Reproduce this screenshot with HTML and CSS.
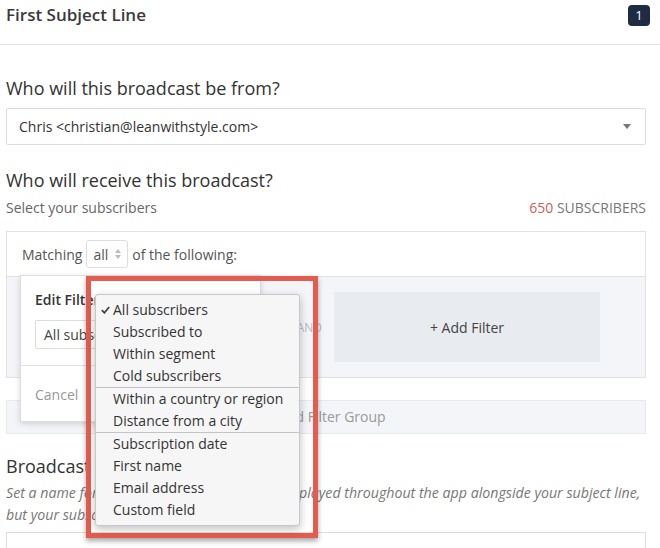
FILE: index.html
```html
<!DOCTYPE html>
<html lang="en">
<head>
    <meta charset="UTF-8">
    <meta name="viewport" content="width=device-width, initial-scale=1.0">
    <title>Broadcast - Subscribers</title>
    <link rel="stylesheet" href="styles.css">
</head>
<body>
    <div class="subject-header">
        <span class="subject-title">First Subject Line</span>
        <span class="count-badge">1</span>
    </div>

    <div class="content">
        <h2 class="field-title from-title">Who will this broadcast be from?</h2>
        <div class="select-box">
            <span>Chris &lt;christian@leanwithstyle.com&gt;</span>
            <svg class="caret" width="8" height="5" viewBox="0 0 8 5"><path d="M0 0h8L4 5z" fill="#777"/></svg>
        </div>

        <h2 class="field-title receive-title">Who will receive this broadcast?</h2>
        <div class="subscribers-row">
            <span>Select your subscribers</span>
            <span class="subscriber-count"><b>650</b> SUBSCRIBERS</span>
        </div>

        <div class="filter-box">
            <div class="matching-row">
                <span>Matching</span>
                <span class="mini-select">all
                    <svg width="6" height="10" viewBox="0 0 6 10"><path d="M0 4L3 0l3 4zM0 6h6l-3 4z" fill="#bbb"/></svg>
                </span>
                <span>of the following:</span>
            </div>
            <div class="filter-group">
                <div class="filter-slot">
                    <div class="edit-card">
                        <div class="card-body">
                            <h4>Edit Filter</h4>
                            <div class="card-select">All subscribers</div>
                        </div>
                        <div class="card-footer">
                            <span class="cancel">Cancel</span>
                            <span class="save">Save</span>
                        </div>
                    </div>
                </div>
                <div class="and-label">AND</div>
                <div class="add-filter">+ Add Filter</div>
            </div>
        </div>

        <div class="add-group">+ Add Filter Group</div>

        <h2 class="field-title name-title">Broadcast Name</h2>
        <p class="help-text">Set a name for the broadcast. It will only be displayed throughout the app alongside your subject line, but your subscribers won't see it.</p>
        <div class="name-input"></div>
    </div>

    <!-- annotation drawn over the screenshot -->
    <div class="highlight"></div>

    <ul class="option-menu">
        <li class="checked">
            <svg class="check" width="9" height="8" viewBox="0 0 9 8"><path d="M0.8 4.2l2.6 2.6L8.2 1" fill="none" stroke="#444" stroke-width="1.8"/></svg>
            All subscribers
        </li>
        <li>Subscribed to</li>
        <li>Within segment</li>
        <li class="group-end">Cold subscribers</li>
        <li>Within a country or region</li>
        <li class="group-end">Distance from a city</li>
        <li>Subscription date</li>
        <li>First name</li>
        <li>Email address</li>
        <li>Custom field</li>
    </ul>
</body>
</html>
```

FILE: styles.css
```css
body {
    margin: 0;
    font-family: "Open Sans", sans-serif;
    color: #333;
    background: #fff;
}

.subject-header {
    display: flex;
    justify-content: space-between;
    align-items: flex-start;
    height: 44px;
    padding: 0 10px 0 6px;
    border-bottom: 1px solid #e2e2e2;
}

.subject-title {
    font-size: 17px;
    font-weight: 600;
    line-height: 30px;
    color: #3a3a3a;
}

.count-badge {
    margin-top: 5px;
    width: 22px;
    height: 21px;
    background: #1f2b45;
    border-radius: 4px;
    color: #fff;
    font-size: 13px;
    line-height: 21px;
    text-align: center;
}

.content {
    margin: 0 14px 0 6px;
}

.field-title {
    margin: 0;
    font-size: 18px;
    font-weight: 400;
    line-height: 26px;
    color: #333;
}

.from-title {
    margin-top: 30px;
}

.select-box {
    margin-top: 7px;
    height: 37px;
    box-sizing: border-box;
    border: 1px solid #ddd;
    border-radius: 2px;
    display: flex;
    align-items: center;
    justify-content: space-between;
    padding: 0 14px 0 12px;
    font-size: 14px;
    color: #333;
}

.receive-title {
    margin-top: 22px;
}

.subscribers-row {
    margin-top: 5px;
    display: flex;
    justify-content: space-between;
    font-size: 14px;
    line-height: 20px;
    color: #666;
}

.subscriber-count {
    color: #777;
}

.subscriber-count b {
    font-weight: 400;
    color: #d35b5b;
}

.filter-box {
    margin-top: 13px;
    border: 1px solid #e2e2e2;
}

.matching-row {
    height: 44px;
    display: flex;
    align-items: center;
    padding-left: 15px;
    font-size: 14px;
    color: #555;
}

.mini-select {
    height: 28px;
    box-sizing: border-box;
    margin: 0 4px;
    padding: 0 6px;
    border: 1px solid #ddd;
    border-radius: 3px;
    display: flex;
    align-items: center;
    gap: 7px;
}

.filter-group {
    height: 101px;
    box-sizing: border-box;
    border-top: 1px solid #e2e2e2;
    background: #f3f5f8;
    padding: 15px 0 15px 13px;
    display: flex;
}

.filter-slot {
    width: 260px;
    position: relative;
}

.edit-card {
    position: absolute;
    top: -17px;
    left: 0;
    width: 241px;
    height: 147px;
    box-sizing: border-box;
    background: #fff;
    border: 1px solid #ddd;
    box-shadow: 0 2px 6px rgba(0, 0, 0, 0.15);
    z-index: 1;
}

.card-body {
    padding: 14px 14px 16px;
    border-bottom: 1px solid #e2e2e2;
}

.card-body h4 {
    margin: 0;
    font-size: 14px;
    font-weight: 600;
    line-height: 20px;
    color: #333;
}

.card-select {
    margin-top: 10px;
    height: 29px;
    box-sizing: border-box;
    border: 1px solid #ddd;
    border-radius: 2px;
    padding: 0 8px;
    font-size: 14px;
    line-height: 27px;
    color: #444;
}

.card-footer {
    height: 56px;
    display: flex;
    align-items: center;
    justify-content: space-between;
    padding: 0 14px;
    font-size: 14px;
}

.cancel {
    color: #999;
}

.save {
    color: #fff;
}

.and-label {
    width: 54px;
    box-sizing: border-box;
    padding-right: 12px;
    align-self: center;
    text-align: right;
    font-size: 12px;
    color: #bbb;
}

.add-filter {
    width: 266px;
    height: 70px;
    background: #e8ebef;
    display: flex;
    align-items: center;
    justify-content: center;
    font-size: 14px;
    color: #444;
}

.add-group {
    margin-top: 22px;
    height: 34px;
    box-sizing: border-box;
    background: #f3f5f8;
    border: 1px solid #e6e9ee;
    text-align: center;
    font-size: 14px;
    line-height: 32px;
    color: #999;
}

.name-title {
    margin-top: 19px;
}

.help-text {
    margin: 3px 0 0;
    font-size: 14.2px;
    font-style: italic;
    line-height: 22px;
    color: #777;
}

.name-input {
    margin-top: 6px;
    height: 40px;
    border: 1px solid #ddd;
}

.highlight {
    position: absolute;
    left: 86px;
    top: 276px;
    width: 232px;
    height: 262px;
    box-sizing: border-box;
    border: 5px solid #e35c4e;
    box-shadow: 0 3px 5px rgba(0, 0, 0, 0.35);
    z-index: 2;
}

.option-menu {
    position: absolute;
    left: 95px;
    top: 294px;
    width: 205px;
    box-sizing: border-box;
    margin: 0;
    padding: 4px 0;
    list-style: none;
    background: #f6f6f6;
    border: 1px solid #c8c8c8;
    border-radius: 3px;
    box-shadow: 0 3px 8px rgba(0, 0, 0, 0.25);
    z-index: 3;
}

.option-menu li {
    position: relative;
    height: 22px;
    padding-left: 17px;
    font-size: 14px;
    line-height: 22px;
    color: #333;
}

.option-menu li.group-end {
    border-bottom: 1px solid #c4c4c4;
}

.check {
    position: absolute;
    left: 5px;
    top: 7px;
}
```
